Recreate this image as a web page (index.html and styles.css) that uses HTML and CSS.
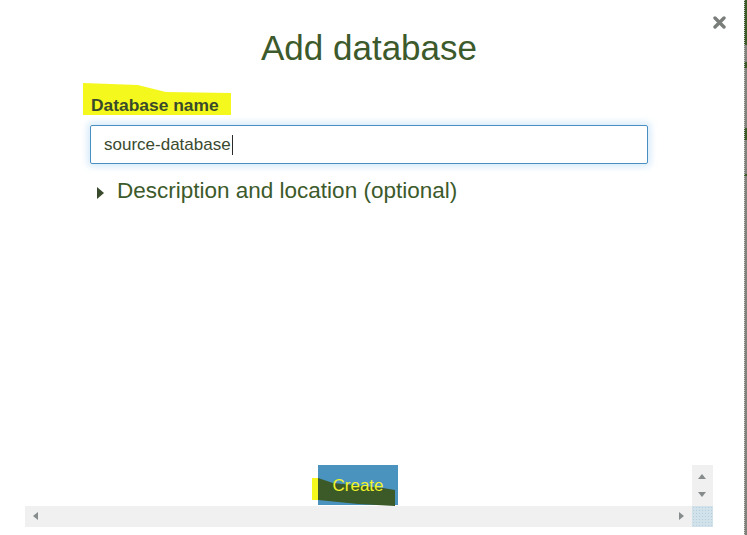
FILE: index.html
```html
<!DOCTYPE html>
<html>
<head>
<meta charset="utf-8">
<title>Add database</title>
<link rel="stylesheet" href="styles.css">
</head>
<body>
<div class="page">
  <div class="dialog">
    <button class="close" aria-label="Close">
      <svg width="13" height="13" viewBox="0 0 13 13"><path d="M2 2 L11 11 M11 2 L2 11" stroke="#7a7e7b" stroke-width="3.4" stroke-linecap="round"/></svg>
    </button>
    <div class="content">
      <h1 class="title">Add database</h1>
      <div class="field">
        <label class="label"><span class="label-text">Database name</span></label>
        <div class="input"><span class="input-text">source-database</span><span class="caret"></span></div>
      </div>
      <div class="disclosure">
        <span class="tri"></span>
        <span class="disc-text">Description and location (optional)</span>
      </div>
    </div>
    <div class="spacer"></div>
    <div class="bottom">
      <div class="btn-cell">
        <div class="create"><span class="create-text">Create</span></div>
      </div>
      <div class="vscroll">
        <span class="arr up"></span>
        <span class="arr down"></span>
      </div>
      <div class="hscroll">
        <span class="arr left"></span>
        <span class="arr right"></span>
      </div>
      <div class="corner"></div>
    </div>
  </div>
  <div class="strip"></div>
</div>
</body>
</html>
```

FILE: styles.css
```css
html, body {
  margin: 0;
  padding: 0;
  background: #ffffff;
}

body {
  font-family: "Liberation Sans", Arial, sans-serif;
}

.page {
  display: flex;
  width: 747px;
  height: 535px;
  overflow: hidden;
}

.dialog {
  flex: 1;
  position: relative;
  display: flex;
  flex-direction: column;
}

.strip {
  width: 3px;
  background: linear-gradient(to bottom,
    #3c5a28 0, #3c5a28 45px,
    #80817a 45px, #80817a 62px,
    #3c5a28 62px, #3c5a28 68px,
    #80817a 68px, #80817a 128px,
    #3c5a28 128px, #3c5a28 140px,
    #80817a 140px, #80817a 174px,
    #3c5a28 174px, #3c5a28 176px,
    #80817a 176px);
  border-left: 1px dotted #c9cbc6;
  box-sizing: border-box;
}

.close {
  position: absolute;
  top: 16px;
  right: 18px;
  width: 13px;
  height: 13px;
  padding: 0;
  border: 0;
  background: none;
  display: block;
}

.close svg {
  display: block;
}

.content {
  margin-left: 90px;
  width: 558px;
  padding-top: 28px;
}

.title {
  margin: 0;
  font-size: 35px;
  line-height: 40px;
  font-weight: normal;
  color: #3c5a2b;
  text-align: center;
}

.field {
  margin-top: 27px;
}

.label {
  display: inline-block;
  position: relative;
  margin-left: 1px;
  font-size: 17.4px;
  line-height: 20px;
  font-weight: bold;
  color: #394a2c;
}

.label::before {
  content: "";
  position: absolute;
  left: -8px;
  top: -12px;
  width: 148px;
  height: 32px;
  background: #f4f81c;
  clip-path: polygon(0 0, 37% 2px, 56% 9px, 100% 10px, 100% 100%, 0 100%);
}

.label-text {
  position: relative;
}

.input {
  margin-top: 10px;
  height: 39px;
  box-sizing: border-box;
  border: 1px solid #4a8fc2;
  border-radius: 2px;
  box-shadow: 0 0 6px 3px rgba(150, 200, 240, 0.35);
  display: flex;
  align-items: center;
  padding-left: 13px;
  font-size: 17px;
  color: #3a4a30;
}

.caret {
  width: 1px;
  height: 20px;
  background: #2a2a2a;
  margin-left: 1px;
}

.disclosure {
  margin-top: 14px;
  display: flex;
  align-items: center;
  height: 26px;
  color: #3c5a2b;
}

.tri {
  width: 0;
  height: 0;
  margin-left: 7px;
  margin-top: 3px;
  border-left: 7px solid #3a4a2c;
  border-top: 6px solid transparent;
  border-bottom: 6px solid transparent;
}

.disc-text {
  margin-left: 13px;
  font-size: 22.5px;
  line-height: 26px;
}

.spacer {
  flex: 1;
}

.bottom {
  margin-left: 25px;
  width: 688px;
  margin-bottom: 8px;
  display: grid;
  grid-template-columns: 1fr 21px;
  grid-template-rows: 41px 21px;
}

.btn-cell {
  position: relative;
}

.create {
  position: relative;
  margin-left: 293px;
  width: 80px;
  height: 40px;
  background: #4a93bf;
  display: flex;
  align-items: center;
  justify-content: center;
}

.create::before {
  content: "";
  position: absolute;
  left: 0;
  top: 0;
  width: 77px;
  height: 41px;
  background: #3c5a28;
  clip-path: polygon(0 13px, 15px 18px, 65px 23px, 77px 25px, 77px 41px, 40px 39px, 0 35px);
}

.create::after {
  content: "";
  position: absolute;
  left: -6px;
  top: 13px;
  width: 6px;
  height: 22px;
  background: #f4f81c;
}

.create-text {
  position: relative;
  font-size: 17px;
  line-height: 19px;
  color: #f1f52a;
}

.vscroll {
  background: #f0f0f0;
  position: relative;
}

.hscroll {
  background: #f0f0f0;
  position: relative;
}

.corner {
  background-color: #d2e2ea;
  background-image: radial-gradient(#b5cfdc 0.8px, transparent 1px);
  background-size: 3px 3px;
}

.arr {
  position: absolute;
  width: 0;
  height: 0;
}

.up {
  left: 6px;
  top: 9px;
  border-bottom: 5px solid #868c8c;
  border-left: 4px solid transparent;
  border-right: 4px solid transparent;
}

.down {
  left: 6px;
  top: 27px;
  border-top: 5px solid #868c8c;
  border-left: 4px solid transparent;
  border-right: 4px solid transparent;
}

.left {
  left: 8px;
  top: 6px;
  border-right: 5px solid #868c8c;
  border-top: 4px solid transparent;
  border-bottom: 4px solid transparent;
}

.right {
  left: 654px;
  top: 6px;
  border-left: 5px solid #868c8c;
  border-top: 4px solid transparent;
  border-bottom: 4px solid transparent;
}
```
